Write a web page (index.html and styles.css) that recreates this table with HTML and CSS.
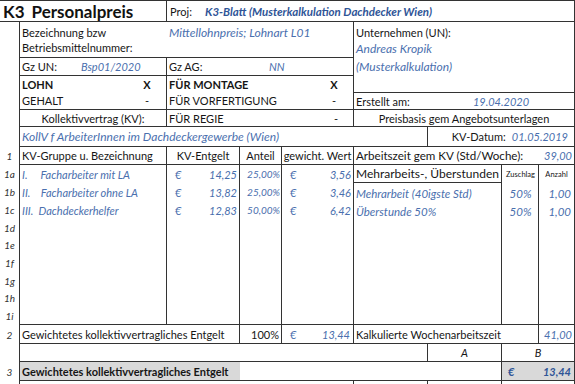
FILE: index.html
```html
<!DOCTYPE html>
<html lang="de">
<head>
<meta charset="utf-8">
<title>K3 Personalpreis</title>
<link rel="stylesheet" href="styles.css">
</head>
<body>
<div class="sheet">
  <!-- row 1: title -->
  <div class="cell x1 w2 y1 br bb title"><span class="t-k3">K3</span><span class="t-name">Personalpreis</span></div>
  <div class="cell x3 w7 y1 bb proj"><span class="proj-lbl">Proj:</span><span class="bi">K3-Blatt (Musterkalkulation Dachdecker Wien)</span></div>

  <!-- left gutter rows 2-7 -->
  <div class="cell x1 y2 h6 br"></div>

  <!-- row 2 -->
  <div class="cell x2 y2 bb stack top"><span class="ln">Bezeichnung bzw</span><span class="ln">Betriebsmittelnummer:</span></div>
  <div class="cell x3 w3 y2 bb br top"><span class="ln blue it lg">Mittellohnpreis; Lohnart L01</span></div>
  <div class="cell x6 w4 y2 h3 bb stack top"><span class="ln">Unternehmen (UN):</span><span class="ln un blue it lg">Andreas Kropik</span><span class="ln un blue it lg">(Musterkalkulation)</span></div>

  <!-- row 3 -->
  <div class="cell x2 y3 bb br"><span class="gz-un">Gz UN:</span><span class="blue it">Bsp01/2020</span></div>
  <div class="cell x3 w3 y3 bb br"><span class="gz-ag">Gz AG:</span><span class="blue it">NN</span></div>

  <!-- rows 4-5 -->
  <div class="cell x2 y4 h2 bb br stack">
    <div class="mark-line"><span class="b">LOHN</span><span class="mark b">X</span></div>
    <div class="mark-line"><span>GEHALT</span><span class="mark">-</span></div>
  </div>
  <div class="cell x3 w3 y4 h2 bb br stack">
    <div class="mark-line"><span class="b">FÜR MONTAGE</span><span class="mark b">X</span></div>
    <div class="mark-line"><span>FÜR VORFERTIGUNG</span><span class="mark">-</span></div>
  </div>
  <div class="cell x6 y5 bb">Erstellt am:</div>
  <div class="cell x7 w3 y5 bb center blue it">19.04.2020</div>

  <!-- row 6 -->
  <div class="cell x2 y6 bb br center">Kollektivvertrag (KV):</div>
  <div class="cell x3 w3 y6 bb br mark-line"><span>FÜR REGIE</span><span class="mark">-</span></div>
  <div class="cell x6 w4 y6 bb center">Preisbasis gem Angebotsunterlagen</div>

  <!-- row 7 -->
  <div class="cell x2 w5 y7 bb br"><span class="blue it lg">KollV f ArbeiterInnen im Dachdeckergewerbe (Wien)</span></div>
  <div class="cell x7 w3 y7 bb right kvd"><span class="kvd-lbl">KV-Datum:</span><span class="blue it">01.05.2019</span></div>

  <!-- row 8: header -->
  <div class="cell x1 y8 br rn">1</div>
  <div class="cell x2 y8 bb br">KV-Gruppe u. Bezeichnung</div>
  <div class="cell x3 y8 bb br center">KV-Entgelt</div>
  <div class="cell x4 y8 bb br center">Anteil</div>
  <div class="cell x5 y8 bb br center">gewicht. Wert</div>
  <div class="cell x6 w4 y8 bb between"><span class="az">Arbeitszeit gem KV (Std/Woche):</span><span class="blue it">39,00</span></div>

  <!-- body rules -->
  <div class="cell x2 y9 h9 br bb"></div>
  <div class="cell x3 y9 h9 br bb"></div>
  <div class="cell x4 y9 h9 br bb"></div>
  <div class="cell x5 y9 h9 br bb"></div>
  <div class="cell x6 w2 y9 h9 br bb"></div>
  <div class="cell x8 y9 h9 br bb"></div>
  <div class="cell x9 y9 h9 bb"></div>

  <!-- row labels -->
  <div class="cell x1 y9 br rn">1a</div>
  <div class="cell x1 y10 br rn">1b</div>
  <div class="cell x1 y11 br rn">1c</div>
  <div class="cell x1 y12 br rn">1d</div>
  <div class="cell x1 y13 br rn">1e</div>
  <div class="cell x1 y14 br rn">1f</div>
  <div class="cell x1 y15 br rn">1g</div>
  <div class="cell x1 y16 br rn">1h</div>
  <div class="cell x1 y17 br rn">1i</div>

  <!-- 1a -->
  <div class="cell x2 y9 blue it pre">I.     Facharbeiter mit LA</div>
  <div class="cell x3 y9 money blue it"><span>€</span><span>14,25</span></div>
  <div class="cell x4 y9 pct blue it">25,00%</div>
  <div class="cell x5 y9 money blue it"><span>€</span><span>3,56</span></div>
  <div class="cell x6 w2 y9 bb br mh">Mehrarbeits-, Überstunden</div>
  <div class="cell x8 y9 tiny center">Zuschlag</div>
  <div class="cell x9 y9 tiny center">Anzahl</div>

  <!-- 1b -->
  <div class="cell x2 y10 blue it pre">II.    Facharbeiter ohne LA</div>
  <div class="cell x3 y10 money blue it"><span>€</span><span>13,82</span></div>
  <div class="cell x4 y10 pct blue it">25,00%</div>
  <div class="cell x5 y10 money blue it"><span>€</span><span>3,46</span></div>
  <div class="cell x6 w2 y10 blue it big low">Mehrarbeit (40igste Std)</div>
  <div class="cell x8 y10 center blue it big low">50%</div>
  <div class="cell x9 y10 right blue it big low">1,00</div>

  <!-- 1c -->
  <div class="cell x2 y11 blue it pre">III.  Dachdeckerhelfer</div>
  <div class="cell x3 y11 money blue it"><span>€</span><span>12,83</span></div>
  <div class="cell x4 y11 pct blue it">50,00%</div>
  <div class="cell x5 y11 money blue it"><span>€</span><span>6,42</span></div>
  <div class="cell x6 w2 y11 blue it big low">Überstunde 50%</div>
  <div class="cell x8 y11 center blue it big low">50%</div>
  <div class="cell x9 y11 right blue it big low">1,00</div>

  <!-- row 2 -->
  <div class="cell x1 y18 br rn">2</div>
  <div class="cell x2 w2 y18 bb br">Gewichtetes kollektivvertragliches Entgelt</div>
  <div class="cell x4 y18 bb br right">100%</div>
  <div class="cell x5 y18 bb br money blue it"><span>€</span><span>13,44</span></div>
  <div class="cell x6 w3 y18 bb br">Kalkulierte Wochenarbeitszeit</div>
  <div class="cell x9 y18 bb right blue it">41,00</div>

  <!-- A / B -->
  <div class="cell x1 y19 br"></div>
  <div class="cell x2 w5 y19 bb br"></div>
  <div class="cell x7 y19 bb br center it">A</div>
  <div class="cell x8 w2 y19 bb center it">B</div>

  <!-- row 3 -->
  <div class="cell x1 y20 br rn">3</div>
  <div class="cell x2 w2 y20 bb shade b">Gewichtetes kollektivvertragliches Entgelt</div>
  <div class="cell x4 w4 y20 bb br"></div>
  <div class="cell x8 w2 y20 bb shade money total"><span>€</span><span>13,44</span></div>

  <!-- tail -->
  <div class="cell x1 y21 br"></div>
  <div class="cell x2 w4 y21 br"></div>
  <div class="cell x6 y21 br"></div>
  <div class="cell x7 y21 br"></div>
  <div class="cell x8 w2 y21"></div>
</div>
</body>
</html>
```

FILE: styles.css
```css
:root {
  --line: #333;
  --blue: #4a6fae;
  --blue-dark: #2f5597;
  --text: #161616;
}

html, body {
  margin: 0;
  padding: 0;
  background: #fff;
  overflow: hidden;
}

body {
  font-family: "Lato", "Open Sans", "Liberation Sans", sans-serif;
  font-size: 11px;
  color: var(--text);
}

.sheet {
  display: grid;
  width: 575px;
  box-sizing: border-box;
  border-top: 1px solid var(--line);
  border-right: 1px solid var(--line);
  grid-template-columns: 20px 147px 73px 42px 72px 74px 74px 37px 35px;
  grid-template-rows: 21px 36px 18px 17px 17px 17px 20px 18px
    18px 18px 18px 17px 18px 18px 17px 18px 18px
    19px 18px 19px 12px;
}

.cell {
  box-sizing: border-box;
  display: flex;
  align-items: center;
  padding: 0 2px;
  min-width: 0;
  white-space: nowrap;
  overflow: hidden;
}

/* placement */
.x1 { grid-column-start: 1; }
.x2 { grid-column-start: 2; }
.x3 { grid-column-start: 3; }
.x4 { grid-column-start: 4; }
.x5 { grid-column-start: 5; }
.x6 { grid-column-start: 6; }
.x7 { grid-column-start: 7; }
.x8 { grid-column-start: 8; }
.x9 { grid-column-start: 9; }
.w2 { grid-column-end: span 2; }
.w3 { grid-column-end: span 3; }
.w4 { grid-column-end: span 4; }
.w5 { grid-column-end: span 5; }
.w7 { grid-column-end: span 7; }

.y1 { grid-row-start: 1; }
.y2 { grid-row-start: 2; }
.y3 { grid-row-start: 3; }
.y4 { grid-row-start: 4; }
.y5 { grid-row-start: 5; }
.y6 { grid-row-start: 6; }
.y7 { grid-row-start: 7; }
.y8 { grid-row-start: 8; }
.y9 { grid-row-start: 9; }
.y10 { grid-row-start: 10; }
.y11 { grid-row-start: 11; }
.y12 { grid-row-start: 12; }
.y13 { grid-row-start: 13; }
.y14 { grid-row-start: 14; }
.y15 { grid-row-start: 15; }
.y16 { grid-row-start: 16; }
.y17 { grid-row-start: 17; }
.y18 { grid-row-start: 18; }
.y19 { grid-row-start: 19; }
.y20 { grid-row-start: 20; }
.y21 { grid-row-start: 21; }
.h2 { grid-row-end: span 2; }
.h3 { grid-row-end: span 3; }
.h6 { grid-row-end: span 6; }
.h9 { grid-row-end: span 9; }

/* borders */
.br { border-right: 1px solid var(--line); }
.bb { border-bottom: 1px solid var(--line); }

/* text styles */
.blue { color: var(--blue); }
.it { font-style: italic; }
.b { font-weight: 700; }
.lg { font-size: 12px; }
.bi {
  font-weight: 700;
  font-style: italic;
  font-size: 11.5px;
  color: var(--blue-dark);
}
.pre { white-space: pre; }
.center { justify-content: center; }
.right { justify-content: flex-end; }
.between { justify-content: space-between; }

.title {
  padding-left: 3px;
  font-weight: 700;
  font-size: 17px;
  color: #111;
}
.t-k3 { margin-right: 7px; }

.proj-lbl { margin-left: 1px; width: 35px; }

.stack {
  flex-direction: column;
  align-items: stretch;
  justify-content: flex-start;
}
.top { align-items: flex-start; padding-top: 3px; }
.stack.top { align-items: stretch; }
.ln { display: block; line-height: 15px; }
.un { line-height: 17.5px; }

.gz-un { width: 59px; }
.gz-ag { width: 100px; }

.mark-line {
  display: flex;
  align-items: center;
  justify-content: space-between;
  height: 17px;
}
.cell.mark-line { padding-right: 0; }
.stack .mark-line { padding-right: 0; }
.mark {
  width: 10px;
  text-align: center;
  margin-right: 12px;
}

.kvd { padding-right: 6px; }
.kvd-lbl { margin-right: 6px; }

.az { font-size: 11.6px; }

.rn {
  justify-content: center;
  font-style: italic;
  font-size: 10px;
  color: #333;
}

.money {
  justify-content: space-between;
  padding-left: 8px;
  padding-right: 3px;
}
.pct {
  justify-content: flex-end;
  font-size: 10px;
  padding-right: 2px;
  overflow: visible;
}
.mh { font-size: 12px; }
.big { font-size: 11.5px; }
.low { padding-top: 3px; }
.right.low { padding-right: 3px; }
.tiny { font-size: 7.5px; padding: 0; }

.shade { background: #d9d9d9; }
.total {
  font-weight: 700;
  font-style: italic;
  color: var(--blue-dark);
  padding-left: 6px;
}
```
